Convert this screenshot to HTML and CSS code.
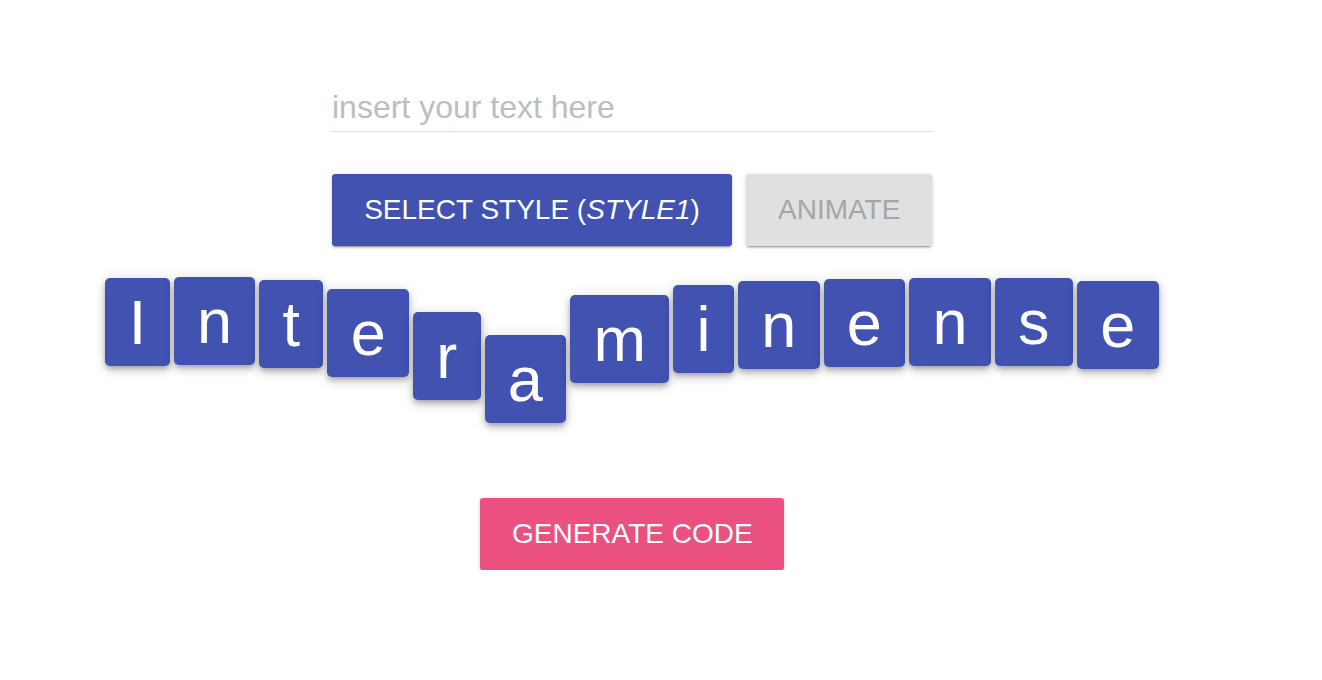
FILE: index.html
```html
<!DOCTYPE html>
<html lang="en">
<head>
<meta charset="utf-8">
<title>Letter tiles</title>
<link rel="stylesheet" href="styles.css">
</head>
<body>
<main class="page">
  <input class="text-input" type="text" placeholder="insert your text here">
  <div class="actions">
    <button class="btn btn-primary">SELECT STYLE (<em>STYLE1</em>)</button>
    <button class="btn btn-disabled">ANIMATE</button>
  </div>
  <div class="tiles">
    <span class="tile">I</span>
    <span class="tile">n</span>
    <span class="tile">t</span>
    <span class="tile">e</span>
    <span class="tile">r</span>
    <span class="tile">a</span>
    <span class="tile">m</span>
    <span class="tile">i</span>
    <span class="tile">n</span>
    <span class="tile">e</span>
    <span class="tile">n</span>
    <span class="tile">s</span>
    <span class="tile">e</span>
  </div>
  <button class="btn btn-accent">GENERATE CODE</button>
</main>
</body>
</html>
```
FILE: styles.css
```css
* { box-sizing: border-box; }

html, body {
  margin: 0;
  padding: 0;
  background: #ffffff;
}

body {
  font-family: "Liberation Sans", Arial, Helvetica, sans-serif;
}

.page {
  width: 1264px;
  display: flex;
  flex-direction: column;
  align-items: center;
  padding-top: 89px;
}

.text-input {
  width: 600px;
  border: none;
  border-bottom: 1px solid #dedede;
  outline: none;
  padding: 0 0 5px 0;
  margin: 0;
  font-family: "Liberation Sans", Arial, Helvetica, sans-serif;
  font-size: 32px;
  line-height: 37px;
  height: 43px;
  color: #333;
  background: transparent;
}

.text-input::placeholder {
  color: #bdbdbd;
}

.actions {
  display: flex;
  gap: 14px;
  margin-top: 42px;
}

.btn {
  height: 72px;
  padding: 0 32px;
  border: none;
  border-radius: 3px;
  font-family: "Liberation Sans", Arial, Helvetica, sans-serif;
  font-size: 28px;
  line-height: 72px;
  white-space: nowrap;
  cursor: pointer;
  box-shadow: 0 2px 2px 0 rgba(0,0,0,.14), 0 3px 1px -2px rgba(0,0,0,.2), 0 1px 5px 0 rgba(0,0,0,.12);
}

.btn em {
  font-style: italic;
}

.btn-primary {
  width: 400px;
  background: #4152b1;
  color: #ffffff;
}

.btn-disabled {
  width: 186px;
  background: #e0e0e0;
  color: #a6a6a6;
}

.btn-accent {
  width: 304px;
  margin-top: 75px;
  background: #ea5181;
  color: #ffffff;
}

.tiles {
  display: flex;
  align-items: flex-start;
  gap: 4px;
  margin-top: 31px;
  height: 146px;
}

.tile {
  display: flex;
  align-items: center;
  justify-content: center;
  height: 88px;
  padding: 0 23.3px;
  background: #4152b1;
  color: #ffffff;
  font-size: 63px;
  border-radius: 5px;
  box-shadow: 0 3px 5px -1px rgba(0,0,0,.22), 0 5px 8px 0 rgba(0,0,0,.14), 0 1px 14px 0 rgba(0,0,0,.12);
}

.tile:nth-child(1)  { margin-top: 1px; }
.tile:nth-child(2)  { margin-top: 0; }
.tile:nth-child(3)  { margin-top: 3px; }
.tile:nth-child(4)  { margin-top: 12px; }
.tile:nth-child(5)  { margin-top: 35px; }
.tile:nth-child(6)  { margin-top: 58px; }
.tile:nth-child(7)  { margin-top: 18px; }
.tile:nth-child(8)  { margin-top: 8px; }
.tile:nth-child(9)  { margin-top: 4px; }
.tile:nth-child(10) { margin-top: 2px; }
.tile:nth-child(11) { margin-top: 1px; }
.tile:nth-child(12) { margin-top: 1px; }
.tile:nth-child(13) { margin-top: 4px; }
```
